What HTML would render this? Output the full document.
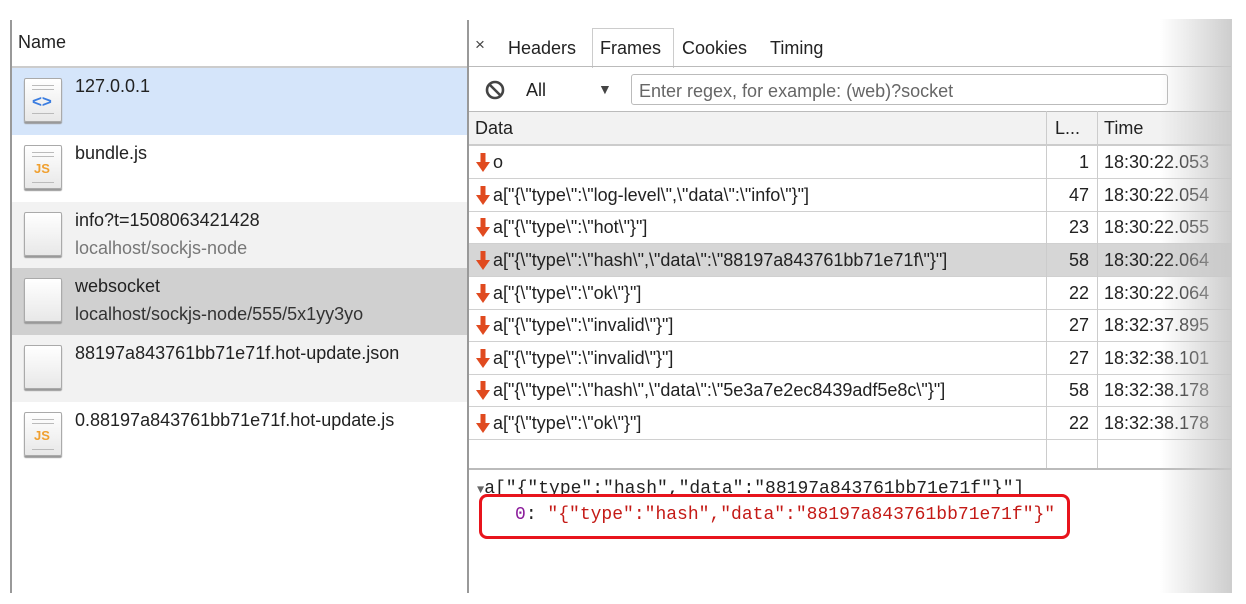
<!DOCTYPE html>
<html><head><style>
*{margin:0;padding:0;box-sizing:border-box}
body{width:1246px;height:604px;background:#fff;position:relative;overflow:hidden;font-family:"Liberation Sans",Arial,sans-serif;color:#222}
.a{position:absolute}
.lrow{position:absolute;left:11px;width:457px;height:67px}
.lrow .t{position:absolute;left:64px;top:8px;font-size:18px;color:#222;white-space:nowrap}
.lrow .s{position:absolute;left:64px;top:36px;font-size:18px;color:#777;white-space:nowrap}
.ic{position:absolute;left:13px;top:10px;width:38px;height:44px;border:1px solid #aaa;border-radius:2px;background:linear-gradient(#fff,#e8e8e8);box-shadow:0 2px 1px #999}
.ic i{position:absolute;left:7px;right:7px;height:1px;background:#bbb}
.drow{position:absolute;left:469px;width:762px;height:33px;border-bottom:1px solid #d0d0d0;font-size:18px}
.drow .d{position:absolute;left:7px;top:6px;white-space:nowrap;padding-left:17px}
.drow .d svg{position:absolute;left:0;top:1px}
.drow .n{position:absolute;left:572px;top:6px;width:48px;text-align:right}
.drow .tm{position:absolute;left:635px;top:6px}
.mono{font-family:"Liberation Mono","DejaVu Sans Mono",monospace;font-size:18px}
</style></head><body>
<div class="a" style="left:18px;top:32px;font-size:18px">Name</div>
<div class="a" style="left:11px;top:66px;width:457px;height:2px;background:#ccc"></div>

<div class="lrow" style="top:68px;background:#d5e5fa"><div class="ic"><i style="top:6px"></i><i style="top:10px"></i><i style="top:34px"></i><span class="a" style="left:7px;top:13px;color:#3b7de0;font-weight:bold;font-size:17px">&lt;&gt;</span></div><div class="t">127.0.0.1</div></div>
<div class="lrow" style="top:135px;background:#fff"><div class="ic"><i style="top:6px"></i><i style="top:10px"></i><i style="top:36px"></i><span class="a" style="left:9px;top:15px;color:#f0a030;font-weight:bold;font-size:13px">JS</span></div><div class="t">bundle.js</div></div>
<div class="lrow" style="top:202px;background:#f2f2f2"><div class="ic"></div><div class="t">info?t=1508063421428</div><div class="s">localhost/sockjs-node</div></div>
<div class="lrow" style="top:268px;background:#d0d0d0"><div class="ic"></div><div class="t">websocket</div><div class="s" style="color:#333">localhost/sockjs-node/555/5x1yy3yo</div></div>
<div class="lrow" style="top:335px;background:#f2f2f2"><div class="ic"></div><div class="t">88197a843761bb71e71f.hot-update.json</div></div>
<div class="lrow" style="top:402px;background:#fff"><div class="ic"><i style="top:6px"></i><i style="top:10px"></i><i style="top:36px"></i><span class="a" style="left:9px;top:15px;color:#f0a030;font-weight:bold;font-size:13px">JS</span></div><div class="t">0.88197a843761bb71e71f.hot-update.js</div></div>
<div class="a" style="left:10px;top:20px;width:2px;height:573px;background:#999"></div>
<div class="a" style="left:467px;top:20px;width:2px;height:573px;background:#999"></div>

<div class="a" style="left:475px;top:35px;font-size:17px;color:#444">×</div>
<div class="a" style="left:508px;top:38px;font-size:18px">Headers</div>
<div class="a" style="left:592px;top:28px;width:82px;height:40px;border:1px solid #ccc;border-bottom:none;background:#fff"></div>
<div class="a" style="left:600px;top:38px;font-size:18px">Frames</div>
<div class="a" style="left:682px;top:38px;font-size:18px">Cookies</div>
<div class="a" style="left:770px;top:38px;font-size:18px">Timing</div>
<div class="a" style="left:469px;top:66px;width:762px;height:1px;background:#bbb"></div>
<svg class="a" style="left:484px;top:79px" width="22" height="22" viewBox="0 0 22 22"><circle cx="11" cy="11" r="8" fill="none" stroke="#444" stroke-width="2.6"/><line x1="5.5" y1="5.5" x2="16.5" y2="16.5" stroke="#444" stroke-width="2.6"/></svg>
<div class="a" style="left:526px;top:80px;font-size:18px">All</div>
<div class="a" style="left:598px;top:81px;font-size:14px;color:#444">▼</div>
<div class="a" style="left:631px;top:74px;width:537px;height:31px;border:1px solid #bbb;border-radius:3px"></div>
<div class="a" style="left:639px;top:81px;font-size:18px;color:#666">Enter regex, for example: (web)?socket</div>
<div class="a" style="left:469px;top:111px;width:762px;height:35px;background:#f2f2f2;border-top:1px solid #bbb;border-bottom:2px solid #ccc"></div>
<div class="a" style="left:475px;top:118px;font-size:18px">Data</div>
<div class="a" style="left:1055px;top:118px;font-size:18px">L...</div>
<div class="a" style="left:1104px;top:118px;font-size:18px">Time</div>

<svg width="0" height="0" style="position:absolute"><defs><symbol id="ar" viewBox="0 0 14 20"><rect x="4.5" y="0" width="5" height="11" fill="#e04a1f"/><polygon points="0,9 14,9 7,19" fill="#e04a1f"/></symbol></defs></svg>

<div class="drow" style="top:146px"><div class="d"><svg width="14" height="20"><use href="#ar"/></svg>o</div><div class="n">1</div><div class="tm">18:30:22.053</div></div>
<div class="drow" style="top:179px"><div class="d"><svg width="14" height="20"><use href="#ar"/></svg>a["{\"type\":\"log-level\",\"data\":\"info\"}"]</div><div class="n">47</div><div class="tm">18:30:22.054</div></div>
<div class="drow" style="top:211px"><div class="d"><svg width="14" height="20"><use href="#ar"/></svg>a["{\"type\":\"hot\"}"]</div><div class="n">23</div><div class="tm">18:30:22.055</div></div>
<div class="drow" style="top:244px;background:#d6d6d6"><div class="d"><svg width="14" height="20"><use href="#ar"/></svg>a["{\"type\":\"hash\",\"data\":\"88197a843761bb71e71f\"}"]</div><div class="n">58</div><div class="tm">18:30:22.064</div></div>
<div class="drow" style="top:277px"><div class="d"><svg width="14" height="20"><use href="#ar"/></svg>a["{\"type\":\"ok\"}"]</div><div class="n">22</div><div class="tm">18:30:22.064</div></div>
<div class="drow" style="top:309px"><div class="d"><svg width="14" height="20"><use href="#ar"/></svg>a["{\"type\":\"invalid\"}"]</div><div class="n">27</div><div class="tm">18:32:37.895</div></div>
<div class="drow" style="top:342px"><div class="d"><svg width="14" height="20"><use href="#ar"/></svg>a["{\"type\":\"invalid\"}"]</div><div class="n">27</div><div class="tm">18:32:38.101</div></div>
<div class="drow" style="top:374px"><div class="d"><svg width="14" height="20"><use href="#ar"/></svg>a["{\"type\":\"hash\",\"data\":\"5e3a7e2ec8439adf5e8c\"}"]</div><div class="n">58</div><div class="tm">18:32:38.178</div></div>
<div class="drow" style="top:407px"><div class="d"><svg width="14" height="20"><use href="#ar"/></svg>a["{\"type\":\"ok\"}"]</div><div class="n">22</div><div class="tm">18:32:38.178</div></div>
<div class="a" style="left:1046px;top:111px;width:1px;height:357px;background:#ccc"></div>
<div class="a" style="left:1097px;top:111px;width:1px;height:357px;background:#ccc"></div>
<div class="a" style="left:469px;top:468px;width:762px;height:2px;background:#bbb"></div>

<div class="a mono" style="left:477px;top:479px;color:#222;white-space:nowrap"><span style="font-size:12px;color:#666">▼</span>a["{"type":"hash","data":"88197a843761bb71e71f"}"]</div>
<div class="a mono" style="left:515px;top:505px;white-space:nowrap"><span style="color:#8a1a9a">0</span>: <span style="color:#c41a16">"{"type":"hash","data":"88197a843761bb71e71f"}"</span></div>
<div class="a" style="left:479px;top:494px;width:591px;height:45px;border:3px solid #e8141c;border-radius:8px"></div>

<div class="a" style="left:1160px;top:19px;width:72px;height:574px;background:linear-gradient(90deg,rgba(255,255,255,0),rgba(200,200,200,.9))"></div>
</body></html>
